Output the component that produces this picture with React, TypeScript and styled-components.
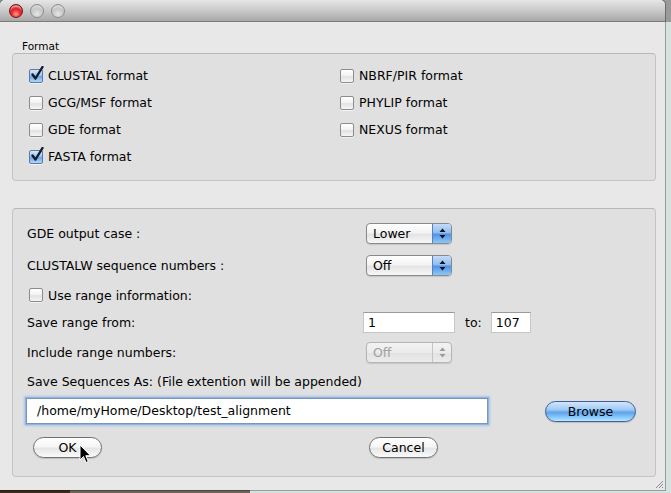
import React from "react";
import styled, { createGlobalStyle, css } from "styled-components";

const Global = createGlobalStyle`
  html, body { margin: 0; padding: 0; }
  body {
    width: 671px;
    height: 493px;
    overflow: hidden;
    font-family: "DejaVu Sans", "Liberation Sans", sans-serif;
    color: #000;
  }
`;

const Page = styled.div`
  position: relative;
  width: 671px;
  height: 493px;
  background:
    linear-gradient(to bottom, #9a9a9a 0 22px, transparent 22px),
    linear-gradient(to right, #3d2a1c 0 70px, #6d6458 70px 250px, #d4e3e0 250px);
  display: flex;
  align-items: flex-start;
`;

const Window = styled.div`
  position: relative;
  width: 665px;
  height: 490px;
  background: #e8e8e8;
  border-radius: 5px 5px 0 0;
  box-shadow: 0 0 0 1px rgba(0, 0, 0, 0.3);
  display: flex;
  flex-direction: column;
  overflow: hidden;
`;

const TitleBar = styled.div`
  height: 22px;
  flex: none;
  box-sizing: border-box;
  background: linear-gradient(to bottom, #e6e6e6, #c9c9c9 50%, #a8a8a8);
  border-bottom: 1px solid #7c7c7c;
  display: flex;
  align-items: center;
  gap: 7px;
  padding-left: 9px;
  padding-top: 1px;
`;

const Light = styled.span<{ $red?: boolean }>`
  width: 14px;
  height: 14px;
  border-radius: 50%;
  box-sizing: border-box;
  ${(p) =>
    p.$red
      ? css`
          background: radial-gradient(circle at 50% 75%, #ff9a9a 0, #f02a2a 40%, #b00000 80%, #7a0000 100%);
          border: 1px solid #701010;
          box-shadow: inset 0 3px 2px -1px rgba(255, 255, 255, 0.7);
        `
      : css`
          background: radial-gradient(circle at 50% 75%, #e6e6e6 0, #c6c6c6 50%, #a4a4a4 100%);
          border: 1px solid #8c8c8c;
          box-shadow: inset 0 3px 2px -1px rgba(255, 255, 255, 0.6);
        `}
`;

const Body = styled.div`
  flex: 1;
  display: flex;
  flex-direction: column;
  padding: 0 9px 13px 12px;
`;

const Legend = styled.div`
  font-size: 10.5px;
  line-height: 13px;
  margin: 18px 0 0 10px;
`;

const GroupBox = styled.div<{ $h: number; $mt?: number }>`
  height: ${(p) => p.$h}px;
  margin-top: ${(p) => p.$mt ?? 0}px;
  box-sizing: border-box;
  background: #e0e0e0;
  border: 1px solid #c4c4c4;
  border-top-color: #b8b8b8;
  border-radius: 4px;
`;

const FormatGrid = styled.div`
  display: grid;
  grid-template-columns: 311px auto;
  grid-template-rows: repeat(4, 27px);
  grid-auto-flow: column;
  padding: 8px 0 0 16px;
`;

const CheckItem = styled.label<{ $ml?: number }>`
  display: flex;
  align-items: center;
  gap: 5px;
  font-size: 12.5px;
  margin-left: ${(p) => p.$ml ?? 0}px;
`;

const Box = styled.span<{ $on?: boolean }>`
  position: relative;
  width: 14px;
  height: 14px;
  flex: none;
  box-sizing: border-box;
  border-radius: 2px;
  border: 1px solid ${(p) => (p.$on ? "#5b7aa6" : "#8c8c8c")};
  background: ${(p) =>
    p.$on
      ? "linear-gradient(to bottom, #d6e8fc, #9cc4f3 45%, #6ea4ea 55%, #b4d8fb)"
      : "linear-gradient(to bottom, #ffffff, #f2f2f2 50%, #e2e2e2 55%, #f6f6f6)"};
  box-shadow: 0 1px 0 rgba(255, 255, 255, 0.6);
`;

const Tick = styled.svg`
  position: absolute;
  left: 1px;
  top: -4px;
  width: 13px;
  height: 15px;
`;

const Checkbox = ({ on, label, ml }: { on?: boolean; label: string; ml?: number }) => (
  <CheckItem $ml={ml}>
    <Box $on={on}>
      {on && (
        <Tick viewBox="0 0 13 15">
          <path d="M1.5 8.5 L4.5 12.5 L11.5 1" fill="none" stroke="#141c28" strokeWidth="2.4" strokeLinecap="round" strokeLinejoin="round" />
        </Tick>
      )}
    </Box>
    <span>{label}</span>
  </CheckItem>
);

const OptionsBox = styled(GroupBox)`
  display: flex;
  flex-direction: column;
  padding-left: 12px;
`;

const Row = styled.div<{ $h: number; $mt: number }>`
  height: ${(p) => p.$h}px;
  margin-top: ${(p) => p.$mt}px;
  display: flex;
  align-items: center;
  font-size: 12.5px;
`;

const Label = styled.span<{ $w?: number }>`
  box-sizing: border-box;
  padding-left: 2px;
  width: ${(p) => (p.$w ? `${p.$w}px` : "auto")};
  flex: none;
  white-space: nowrap;
`;

const Popup = styled.div<{ $disabled?: boolean }>`
  width: 86px;
  height: 21px;
  box-sizing: border-box;
  display: flex;
  border-radius: 4px;
  border: 1px solid ${(p) => (p.$disabled ? "#b4b4b4" : "#8a8a8a")};
  background: linear-gradient(to bottom, #ffffff, #f4f4f4 45%, #e4e4e4 55%, #f7f7f7);
  box-shadow: 0 1px 1px rgba(0, 0, 0, 0.12);
  overflow: hidden;
  color: ${(p) => (p.$disabled ? "#a0a0a0" : "#000")};
  ${(p) => p.$disabled && css`background: linear-gradient(to bottom, #f2f2f2, #ebebeb 50%, #e2e2e2 55%, #ececec);`}
`;

const PopupText = styled.span`
  flex: 1;
  padding-left: 6px;
  line-height: 19px;
  font-size: 12.5px;
`;

const PopupArrows = styled.span<{ $disabled?: boolean }>`
  width: 18px;
  flex: none;
  display: flex;
  align-items: center;
  justify-content: center;
  border-left: 1px solid ${(p) => (p.$disabled ? "#c4c4c4" : "#5b7fb8")};
  background: ${(p) =>
    p.$disabled
      ? "transparent"
      : "linear-gradient(to bottom, #c3dcf8, #8fbdf2 45%, #4f95e6 55%, #8cc8fb)"};
`;

const Select = ({ value, disabled }: { value: string; disabled?: boolean }) => (
  <Popup $disabled={disabled}>
    <PopupText>{value}</PopupText>
    <PopupArrows $disabled={disabled}>
      <svg width="7" height="11" viewBox="0 0 7 11">
        <path d="M3.5 0.5 L6.5 4 L0.5 4 Z M3.5 10.5 L6.5 7 L0.5 7 Z" fill={disabled ? "#9a9a9a" : "#111"} />
      </svg>
    </PopupArrows>
  </Popup>
);

const TextField = styled.div<{ $w: number }>`
  width: ${(p) => p.$w}px;
  height: 21px;
  box-sizing: border-box;
  background: #fff;
  border: 1px solid #c6c6c6;
  border-top-color: #9a9a9a;
  padding-left: 4px;
  line-height: 19px;
  font-size: 12.5px;
`;

const ToLabel = styled.span`
  margin: 0 9px 0 10px;
`;

const PathField = styled.div`
  width: 462px;
  height: 26px;
  box-sizing: border-box;
  background: #fff;
  border: 1px solid #7f95b4;
  box-shadow: 0 0 0 1px #8fb3e4, 0 0 2px 2px #a9c6ec;
  padding-left: 10px;
  line-height: 24px;
  font-size: 12.5px;
  margin-left: 1px;
`;

const Pill = styled.div<{ $w: number; $ml: number; $blue?: boolean }>`
  width: ${(p) => p.$w}px;
  height: 21px;
  margin-left: ${(p) => p.$ml}px;
  box-sizing: border-box;
  border-radius: 11px;
  display: flex;
  align-items: center;
  justify-content: center;
  font-size: 12.5px;
  border: 1px solid ${(p) => (p.$blue ? "#3f5f96" : "#717171")};
  background: ${(p) =>
    p.$blue
      ? "linear-gradient(to bottom, #d2e6fb, #9ecaf6 40%, #5fa3ec 55%, #8ed0fc 85%, #c2e6ff)"
      : "linear-gradient(to bottom, #ffffff, #f6f6f6 45%, #e6e6e6 55%, #fafafa)"};
  box-shadow: 0 1px 1px rgba(0, 0, 0, 0.15);
`;

const Cursor = styled.svg`
  position: absolute;
  left: 79px;
  top: 444px;
`;

const Grip = styled.svg`
  position: absolute;
  right: 1px;
  bottom: 1px;
`;

export default function App() {
  return (
    <>
      <Global />
      <Page>
        <Window>
          <TitleBar>
            <Light $red />
            <Light />
            <Light />
          </TitleBar>
          <Body>
            <Legend>Format</Legend>
            <GroupBox $h={128}>
              <FormatGrid>
                <Checkbox on label="CLUSTAL format" />
                <Checkbox label="GCG/MSF format" />
                <Checkbox label="GDE format" />
                <Checkbox on label="FASTA format" />
                <Checkbox label="NBRF/PIR format" />
                <Checkbox label="PHYLIP format" />
                <Checkbox label="NEXUS format" />
              </FormatGrid>
            </GroupBox>
            <OptionsBox $h={269} $mt={27}>
              <Row $h={24} $mt={12}>
                <Label $w={341}>GDE output case :</Label>
                <Select value="Lower" />
              </Row>
              <Row $h={24} $mt={8}>
                <Label $w={341}>CLUSTALW sequence numbers :</Label>
                <Select value="Off" />
              </Row>
              <Row $h={24} $mt={6}>
                <Checkbox label="Use range information:" ml={4} />
              </Row>
              <Row $h={24} $mt={3}>
                <Label $w={338}>Save range from:</Label>
                <TextField $w={92}>1</TextField>
                <ToLabel>to:</ToLabel>
                <TextField $w={40}>107</TextField>
              </Row>
              <Row $h={24} $mt={6}>
                <Label $w={341}>Include range numbers:</Label>
                <Select value="Off" disabled />
              </Row>
              <Row $h={24} $mt={5}>
                <Label>Save Sequences As: (File extention will be appended)</Label>
              </Row>
              <Row $h={26} $mt={5}>
                <PathField>/home/myHome/Desktop/test_alignment</PathField>
                <Pill $w={91} $ml={57} $blue>Browse</Pill>
              </Row>
              <Row $h={21} $mt={13}>
                <Pill $w={69} $ml={8}>OK</Pill>
                <Pill $w={69} $ml={267}>Cancel</Pill>
              </Row>
            </OptionsBox>
          </Body>
          <Cursor width="13" height="20" viewBox="0 0 13 20">
            <path d="M1 1 L1 16 L4.5 12.5 L7 18.5 L9.3 17.5 L6.8 11.7 L11.5 11.7 Z" fill="#000" stroke="#fff" strokeWidth="1" strokeLinejoin="round" />
          </Cursor>
          <Grip width="10" height="10" viewBox="0 0 10 10">
            <path d="M9 2 L2 9 M9 5 L5 9 M9 8 L8 9" stroke="#8a8a8a" strokeWidth="1" />
          </Grip>
        </Window>
      </Page>
    </>
  );
}
